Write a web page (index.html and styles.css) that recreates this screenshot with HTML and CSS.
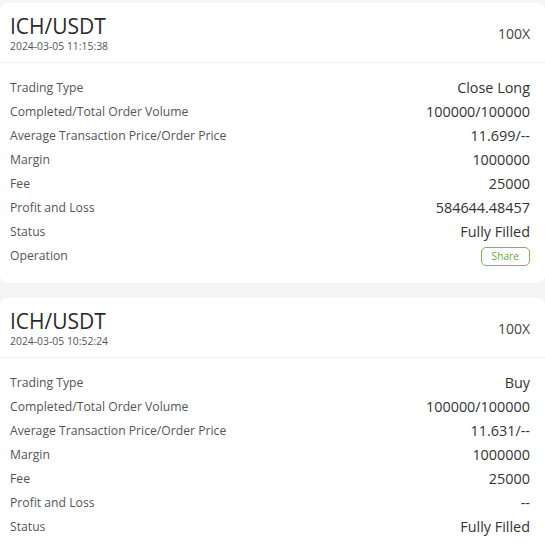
FILE: index.html
```html
<!DOCTYPE html>
<html>
<head>
<meta charset="utf-8">
<link rel="stylesheet" href="styles.css">
</head>
<body>
<div class="list">
  <div class="card">
    <div class="card-head">
      <div class="pair">
        <div class="symbol">ICH/USDT</div>
        <div class="time">2024-03-05 11:15:38</div>
      </div>
      <div class="lev">100X</div>
    </div>
    <div class="rows">
      <div class="row"><span class="k">Trading Type</span><span class="v">Close Long</span></div>
      <div class="row"><span class="k">Completed/Total Order Volume</span><span class="v">100000/100000</span></div>
      <div class="row"><span class="k">Average Transaction Price/Order Price</span><span class="v">11.699/--</span></div>
      <div class="row"><span class="k">Margin</span><span class="v">1000000</span></div>
      <div class="row"><span class="k">Fee</span><span class="v">25000</span></div>
      <div class="row"><span class="k">Profit and Loss</span><span class="v">584644.48457</span></div>
      <div class="row"><span class="k">Status</span><span class="v">Fully Filled</span></div>
      <div class="row"><span class="k">Operation</span><span class="share">Share</span></div>
    </div>
  </div>
  <div class="card">
    <div class="card-head">
      <div class="pair">
        <div class="symbol">ICH/USDT</div>
        <div class="time">2024-03-05 10:52:24</div>
      </div>
      <div class="lev">100X</div>
    </div>
    <div class="rows">
      <div class="row"><span class="k">Trading Type</span><span class="v">Buy</span></div>
      <div class="row"><span class="k">Completed/Total Order Volume</span><span class="v">100000/100000</span></div>
      <div class="row"><span class="k">Average Transaction Price/Order Price</span><span class="v">11.631/--</span></div>
      <div class="row"><span class="k">Margin</span><span class="v">1000000</span></div>
      <div class="row"><span class="k">Fee</span><span class="v">25000</span></div>
      <div class="row"><span class="k">Profit and Loss</span><span class="v">--</span></div>
      <div class="row"><span class="k">Status</span><span class="v">Fully Filled</span></div>
    </div>
  </div>
</div>
</body>
</html>
```
FILE: styles.css
```css
html, body {
  margin: 0;
  padding: 0;
  background: #f5f5f5;
  font-family: "Open Sans", "Noto Sans", sans-serif;
  color: #333;
}
.list {
  padding-top: 3px;
  display: flex;
  flex-direction: column;
  gap: 15px;
}
.card {
  background: #fff;
  border-radius: 8px;
}
.card-head {
  display: flex;
  justify-content: space-between;
  align-items: center;
  padding: 11px 15px 9px 10px;
  border-bottom: 1px solid #eeeeee;
}
.symbol {
  font-size: 21px;
  line-height: 25px;
  color: #2a2a2a;
}
.time {
  font-size: 10.4px;
  line-height: 14px;
  color: #555;
}
.lev {
  font-size: 14px;
  color: #444;
}
.rows {
  padding: 12px 15px 16px 10px;
  display: flex;
  flex-direction: column;
}
.row {
  display: flex;
  justify-content: space-between;
  align-items: center;
  height: 24px;
}
.k {
  font-size: 12.2px;
  color: #555;
}
.v {
  font-size: 14.4px;
  color: #333;
}
.share {
  font-size: 10.2px;
  line-height: 13px;
  color: #67a83a;
  border: 1px solid #7cb85a;
  border-radius: 5px;
  padding: 2px 10px;
  margin-top: 3px;
}
```
